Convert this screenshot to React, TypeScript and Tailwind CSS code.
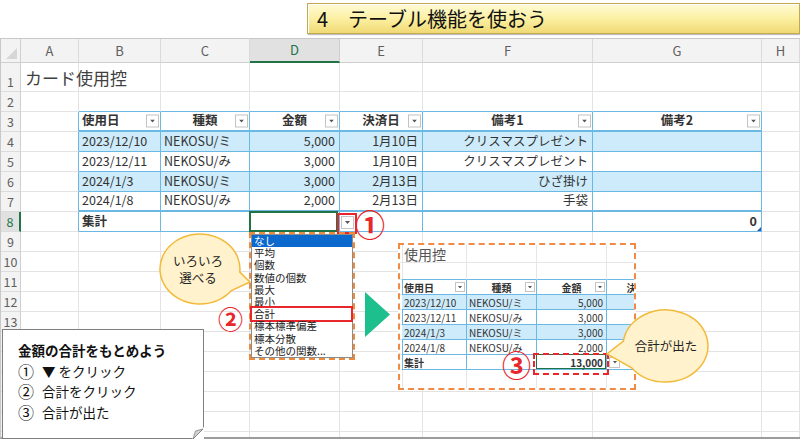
const FONT = "font-['Noto_Sans_CJK_JP','Noto_Sans',sans-serif]";

const COLS = ['A', 'B', 'C', 'D', 'E', 'F', 'G', 'H'];
const HEADS = ['使用日', '種類', '金額', '決済日', '備考1', '備考2'];
const DATA = [
  ['2023/12/10', 'NEKOSU/ミ', '5,000', '1月10日', 'クリスマスプレゼント', ''],
  ['2023/12/11', 'NEKOSU/み', '3,000', '1月10日', 'クリスマスプレゼント', ''],
  ['2024/1/3', 'NEKOSU/ミ', '3,000', '2月13日', 'ひざ掛け', ''],
  ['2024/1/8', 'NEKOSU/み', '2,000', '2月13日', '手袋', ''],
];
const FUNCS = ['なし', '平均', '個数', '数値の個数', '最大', '最小', '合計', '標本標準偏差', '標本分散', 'その他の関数...'];
const STEPS = [
  ['①', '▼ をクリック'],
  ['②', '合計をクリック'],
  ['③', '合計が出た'],
];

function Arrow({ small }: { small?: boolean }) {
  return (
    <svg width={small ? 4 : 5} height={small ? 2.5 : 3} viewBox="0 0 5 3">
      <path d="M0 0h5L2.5 3z" fill="#555" />
    </svg>
  );
}

// 見出しのフィルターボタン
function FilterBtn() {
  return (
    <span className="absolute right-[1px] top-1/2 -translate-y-1/2 w-[13px] h-[13px] border border-[#c4c4c4] bg-white flex items-center justify-center">
      <Arrow />
    </span>
  );
}

function MiniFilterBtn() {
  return (
    <span className="absolute right-[1px] top-1/2 -translate-y-1/2 w-[10px] h-[10px] border border-[#c4c4c4] bg-white flex items-center justify-center">
      <Arrow small />
    </span>
  );
}

function MainCell({ r, c }: { r: number; c: number }) {
  // 列見出し
  if (r === 0) {
    if (c === 0)
      return (
        <div className="relative bg-[#f3f3f3] border-r border-b border-[#cfcfcf]">
          <svg className="absolute right-[3px] bottom-[3px]" width="11" height="11" viewBox="0 0 11 11">
            <path d="M11 0V11H0z" fill="#d6d6d6" />
          </svg>
        </div>
      );
    return (
      <div
        className={
          c === 4
            ? 'flex items-center justify-center bg-[#e1e1e1] text-[#217346] text-[13px] border-r border-r-[#cfcfcf] border-b-2 border-b-[#217346]'
            : 'flex items-center justify-center bg-[#f3f3f3] text-[#5f5f5f] text-[13px] border-r border-r-[#dadada] border-b border-b-[#cfcfcf]'
        }
      >
        {COLS[c - 1]}
      </div>
    );
  }

  // 行番号
  if (c === 0) {
    return (
      <div
        className={
          r === 8
            ? 'flex items-end justify-center pb-[1px] bg-[#e1e1e1] text-[#217346] text-[12.5px] leading-[16px] border-b border-b-[#dcdcdc] border-r-2 border-r-[#217346]'
            : 'flex items-end justify-center pb-[1px] bg-[#f3f3f3] text-[#5f5f5f] text-[12.5px] leading-[16px] border-b border-b-[#dcdcdc] border-r border-r-[#cfcfcf]'
        }
      >
        {r}
      </div>
    );
  }

  const inT = r >= 3 && r <= 8 && c >= 2 && c <= 7;
  const blueR = inT || (c === 1 && r >= 3 && r <= 8);
  const blueB = inT || (r === 2 && c >= 2 && c <= 7);
  const thickB = inT && (r === 3 || r === 7);
  const band = inT && (r === 4 || r === 6);

  let align = 'justify-start pl-[3px]';
  let content: React.ReactNode = null;
  let bold = false;

  if (r === 1 && c === 1) {
    content = <span className="text-[17px] leading-[22px] text-[#404040] pl-[1px]">カード使用控</span>;
  } else if (inT && r === 3) {
    bold = true;
    align = c === 2 ? 'justify-start pl-[3px]' : 'justify-center';
    content = (
      <>
        <span>{HEADS[c - 2]}</span>
        <FilterBtn />
      </>
    );
  } else if (inT && r >= 4 && r <= 7) {
    align = c >= 4 && c <= 6 ? 'justify-end pr-[4px]' : 'justify-start pl-[3px]';
    content = DATA[r - 4][c - 2];
  } else if (inT && r === 8) {
    if (c === 2) {
      bold = true;
      content = '集計';
    } else if (c === 4) {
      content = (
        <>
          <span className="absolute -top-px -left-px right-[1px] -bottom-px border-2 border-[#217346] z-10" />
          <span className="absolute left-[91px] top-[4px] w-[13px] h-[13px] border border-[#c4c4c4] bg-white flex items-center justify-center z-10">
            <Arrow />
          </span>
          <span className="absolute left-[87px] top-[1px] w-[20px] h-[21px] border-2 border-[#e8262b] z-10" />
        </>
      );
    } else if (c === 7) {
      bold = true;
      align = 'justify-end pr-[4px]';
      content = (
        <>
          <span>0</span>
          <svg className="absolute right-0 bottom-0" width="4" height="4" viewBox="0 0 4 4">
            <path d="M4 0V4H0z" fill="#2f5fb3" />
          </svg>
        </>
      );
    }
  }

  const cls = [
    'relative flex items-end pb-[2px] whitespace-nowrap text-[12.5px] leading-[16px] text-[#333]',
    'border-r',
    blueR ? 'border-r-[#6cb8e5]' : 'border-r-[#e3e3e3]',
    thickB ? 'border-b-2' : 'border-b',
    blueB ? 'border-b-[#6cb8e5]' : 'border-b-[#e3e3e3]',
    band ? 'bg-[#cdebfa]' : '',
    bold ? 'font-bold text-[#111]' : '',
    align,
  ].join(' ');

  return <div className={cls}>{content}</div>;
}

function MiniCell({ r, c }: { r: number; c: number }) {
  // r: 0 タイトル, 1 空行, 2 見出し, 3-6 データ, 7 集計
  const inT = r >= 2 && r <= 7 && c >= 1;
  const blueR = inT || (c === 0 && r >= 2 && r <= 7);
  const blueB = inT || (r === 1 && c >= 1);
  const band = inT && (r === 3 || r === 5);

  let align = 'justify-start pl-[2px]';
  let content: React.ReactNode = null;
  let bold = false;

  if (r === 0 && c === 1) {
    content = <span className="text-[14px] leading-[16px] text-[#555]">使用控</span>;
  } else if (inT && r === 2) {
    bold = true;
    align = c === 1 ? 'justify-start pl-[2px]' : 'justify-center';
    content = (
      <>
        <span>{HEADS[c - 1]}</span>
        <MiniFilterBtn />
      </>
    );
  } else if (inT && r >= 3 && r <= 6) {
    align = c >= 3 ? 'justify-end pr-[3px]' : 'justify-start pl-[2px]';
    content = DATA[r - 3][c - 1];
  } else if (inT && r === 7) {
    if (c === 1) {
      bold = true;
      content = '集計';
    } else if (c === 3) {
      bold = true;
      align = 'justify-end pr-[3px]';
      content = (
        <>
          <span className="absolute -top-px -left-px right-0 bottom-0 border border-[#217346]" />
          <span>13,000</span>
        </>
      );
    } else if (c === 4) {
      content = (
        <span className="absolute left-[2px] top-[2px] w-[11px] h-[11px] border border-[#c4c4c4] bg-white flex items-center justify-center">
          <Arrow small />
        </span>
      );
    }
  }

  const cls = [
    'relative flex items-center whitespace-nowrap text-[10px] leading-[13px] text-[#333]',
    'border-r border-b',
    blueR ? 'border-r-[#6cb8e5]' : 'border-r-[#e6e6e6]',
    blueB ? 'border-b-[#6cb8e5]' : 'border-b-[#e6e6e6]',
    band ? 'bg-[#cdebfa]' : '',
    bold ? 'font-bold text-[#111]' : '',
    align,
  ].join(' ');

  return <div className={cls}>{content}</div>;
}

export default function App() {
  const cells = [];
  for (let r = 0; r <= 19; r++) for (let c = 0; c <= 8; c++) cells.push(<MainCell key={`${r}-${c}`} r={r} c={c} />);
  const mini = [];
  for (let r = 0; r <= 9; r++) for (let c = 0; c <= 4; c++) mini.push(<MiniCell key={`${r}-${c}`} r={r} c={c} />);

  return (
    <div className={`relative w-[800px] h-[440px] overflow-hidden bg-white ${FONT}`}>
      {/* タイトル */}
      <div className="h-[38px] flex justify-end pt-[3px]">
        <div className="w-[493px] h-[31px] flex items-center pl-[9px] border border-[#c3aa52] bg-linear-to-b from-[#fffbd6] via-[#fcf0a2] to-[#f0da74] shadow-[inset_1px_1px_0_#ffffff,1px_1px_1px_rgba(0,0,0,0.25)] text-[20px] text-[#111]">
          4　テーブル機能を使おう
        </div>
      </div>

      {/* シート */}
      <div className="h-[401px] border-t border-t-[#c8c8c8] border-l border-l-[#c8c8c8] border-b-2 border-b-[#9c9c9c] overflow-hidden">
        <div className="grid grid-cols-[20px_58px_82px_89px_90px_83px_170px_169px_38px] grid-rows-[24px_29px_repeat(18,20px)]">
          {cells}
        </div>
      </div>

      {/* 集計のドロップダウン */}
      <div className="absolute left-[249px] top-[232px] w-[106px] h-[128px] border-2 border-dashed border-[#ee8a3c] z-20">
        <div className="h-full flex flex-col bg-white border border-[#8c8c8c] text-[10.5px] text-[#222]">
          {FUNCS.map((f, i) => (
            <div
              key={f}
              className={
                i === 0
                  ? 'relative h-[12.2px] flex items-center pl-[2px] bg-[#0b68cc] text-white'
                  : 'relative h-[12.2px] flex items-center pl-[2px]'
              }
            >
              <span className="leading-[12px]">{f}</span>
              {f === '合計' && (
                <span className="absolute -left-[2px] -right-[1px] -top-[2px] -bottom-[2px] border-2 border-[#e8262b]" />
              )}
            </div>
          ))}
        </div>
      </div>

      {/* 結果の画面 */}
      <div className="absolute left-[398px] top-[243px] w-[238px] h-[147px] border-2 border-dashed border-[#f08a45] bg-white overflow-hidden z-20">
        <div className="grid grid-cols-[2px_65px_70px_70px_70px] grid-rows-[18px_17px_repeat(6,15px)_20px_20px]">
          {mini}
        </div>
      </div>
      <div className="absolute left-[533px] top-[353px] w-[76px] h-[22px] border-2 border-dashed border-[#e8262b] z-30" />

      {/* 吹き出し・矢印 */}
      <svg className="absolute inset-0 z-30 pointer-events-none" width="800" height="440" viewBox="0 0 800 440">
        <path d="M231.5 290.5 A40 35 0 1 1 239.8 272.1 L250 282 Z" fill="#fff2cc" stroke="#f2ba3a" strokeWidth="1.5" />
        <path d="M623.4 341 A42.5 36 0 1 1 632 368.2 L607 354 Z" fill="#fff2cc" stroke="#f2ba3a" strokeWidth="1.5" />
        <path d="M365 292 L390 314.5 L365 337 Z" fill="#1dbf8c" />
      </svg>

      <div className="absolute left-[160px] top-[252px] w-[76px] z-40 text-center text-[12.5px] leading-[17px] text-[#222]">
        いろいろ
        <br />
        選べる
      </div>
      <div className="absolute left-[623px] top-[337px] w-[86px] z-40 text-center text-[12.5px] leading-[17px] text-[#222]">
        合計が出た
      </div>

      {/* 説明 */}
      <div className="absolute left-[2px] top-[329px] w-[202px] h-[110px] border border-[#7f7f7f] bg-white z-40 pl-[15px] pt-[10px] text-[13.5px] leading-[20.5px] text-[#111]">
        <div className="font-bold">金額の合計をもとめよう</div>
        {STEPS.map(([n, t]) => (
          <div key={n} className="flex items-center">
            <span className="w-[24px] text-[16px] leading-[20.5px]">{n}</span>
            <span>{t}</span>
          </div>
        ))}
        <svg className="absolute -right-px -bottom-px" width="12" height="12" viewBox="0 0 12 12">
          <path d="M12 0V12H0z" fill="#ffffff" />
          <path d="M1 12 L11 2" stroke="#7f7f7f" strokeWidth="1" />
          <path d="M1 12 L3.5 4 L11 2 Z" fill="#d4d4d4" stroke="#7f7f7f" strokeWidth="0.8" />
        </svg>
      </div>

      {/* 番号 */}
      <div className="absolute left-[355px] top-[208px] w-[30px] h-[30px] z-50 flex items-center justify-center text-[30px] leading-none font-bold text-[#e8262b]">
        ①
      </div>
      <div className="absolute left-[218px] top-[306px] w-[25px] h-[25px] z-50 flex items-center justify-center text-[25px] leading-none font-bold text-[#e8262b]">
        ②
      </div>
      <div className="absolute left-[502px] top-[350px] w-[29px] h-[29px] z-50 flex items-center justify-center text-[29px] leading-none font-bold text-[#e8262b]">
        ③
      </div>
    </div>
  );
}
